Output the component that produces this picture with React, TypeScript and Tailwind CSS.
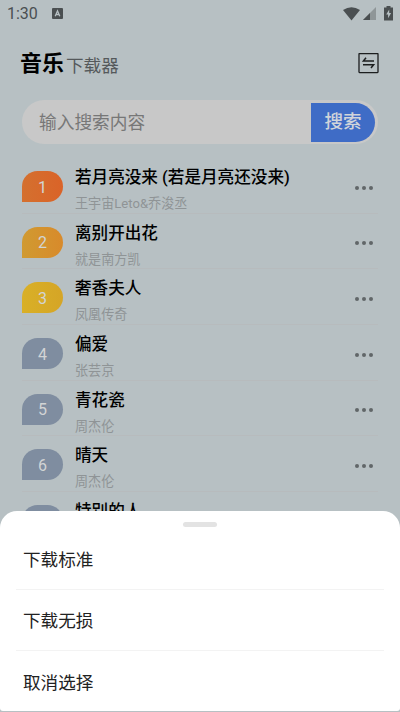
import React, { useState } from 'react';

interface Song {
  rank: number;
  title: string;
  artist: string;
}

const songs: Song[] = [
  { rank: 1, title: '若月亮没来 (若是月亮还没来)', artist: '王宇宙Leto&乔浚丞' },
  { rank: 2, title: '离别开出花', artist: '就是南方凯' },
  { rank: 3, title: '奢香夫人', artist: '凤凰传奇' },
  { rank: 4, title: '偏爱', artist: '张芸京' },
  { rank: 5, title: '青花瓷', artist: '周杰伦' },
  { rank: 6, title: '晴天', artist: '周杰伦' },
  { rank: 7, title: '特别的人', artist: '方大同' },
];

const actions = ['下载标准', '下载无损', '取消选择'];

const badgeColor = (rank: number) => {
  if (rank === 1) return 'bg-linear-to-r from-[#d4702f] to-[#da6328]';
  if (rank === 2) return 'bg-linear-to-r from-[#d09a31] to-[#d88a2b]';
  if (rank === 3) return 'bg-linear-to-r from-[#d9b027] to-[#d5a526]';
  return 'bg-[#7f8da0]';
};

const StatusBar: React.FC = () => (
  <div className="flex h-[27px] shrink-0 items-center pl-[7px] pr-[3px] text-[#4a4f51]">
    <span className="w-[45px] pt-px text-[16px] leading-7">1:30</span>
    <svg width="11" height="11" viewBox="0 0 11 11">
      <rect width="11" height="11" rx="1" fill="currentColor" />
      <path d="M3.2 8.2 5.5 2.8 7.8 8.2M4.1 6.5h2.8" fill="none" stroke="#b7c0c3" strokeWidth="1.3" />
    </svg>
    <svg className="ml-auto" width="17" height="14" viewBox="0 0 17 14">
      <path d="M0 3Q8.5-2.6 17 3L8.5 13.6Z" fill="currentColor" />
    </svg>
    <svg className="ml-[3px]" width="13" height="13" viewBox="0 0 13 13">
      <path d="M13 0V13H0Z" fill="#8f9698" />
      <path d="M7 6V13H0Z" fill="currentColor" />
    </svg>
    <svg className="ml-2 mr-1" width="9" height="15" viewBox="0 0 9 15">
      <path d="M2.5 0h4v1.5H9V14.4H0V1.5h2.5Z" fill="currentColor" />
      <path d="M5.2 3.4 2.2 8.5h1.9v3.8l3-5.2H5.2Z" fill="#b7c0c3" />
    </svg>
  </div>
);

const SongRow: React.FC<{ song: Song }> = ({ song }) => (
  <div className="flex h-[55.7px] shrink-0 border-b border-[#b7bbbd]">
    <div
      className={`mt-[13px] flex h-[31px] w-[41px] shrink-0 items-center justify-center rounded-[16px] rounded-bl-none pt-[2px] text-[16px] text-[#d2d4d5] ${badgeColor(song.rank)}`}
    >
      {song.rank}
    </div>
    <div className="ml-3 min-w-0 flex-1 pt-[8px]">
      <p className="h-[26px] text-[16.6px] leading-[24px] font-medium whitespace-nowrap text-black">{song.title}</p>
      <p className="text-[13.1px] leading-[24px] whitespace-nowrap text-[#8f9496]">{song.artist}</p>
    </div>
    <button type="button" className="mt-[27.5px] mr-[5px] flex h-1 w-[18px] items-center justify-between" aria-label="更多">
      <i className="size-[4px] rounded-full bg-[#616668]" />
      <i className="size-[4px] rounded-full bg-[#616668]" />
      <i className="size-[4px] rounded-full bg-[#616668]" />
    </button>
  </div>
);

const App: React.FC = () => {
  const [open, setOpen] = useState(true);

  return (
    <div className="relative flex h-[712px] w-[400px] flex-col overflow-hidden bg-[#b7c0c3] font-[Roboto,'Noto_Sans_CJK_SC',sans-serif]">
      <StatusBar />

      <header className="flex h-[73px] shrink-0 items-center justify-between pr-[21px] pl-5">
        <h1 className="flex items-center text-black">
          <span className="text-[22px] leading-8 font-bold">音乐</span>
          <span className="ml-[2px] pt-[5px] text-[17.6px] text-[#55595b]">下载器</span>
        </h1>
        <svg width="21" height="21" viewBox="0 0 21 21" fill="none" stroke="#1c1e1f">
          <rect x="1" y="0.6" width="19" height="19" rx="0.5" strokeWidth="1.3" />
          <path d="M16 8H5.4L8 4.8M5 11.8H15.6L13 15" strokeWidth="1.5" />
        </svg>
      </header>

      <div className="mr-[22px] ml-[22px] flex h-[44px] shrink-0 items-center rounded-full bg-[#c8c8c8] pr-[3px] pl-[17px]">
        <span className="flex-1 pt-[3px] text-[17.7px] text-[#777777]">输入搜索内容</span>
        <button
          type="button"
          className="h-[39px] w-16 rounded-r-full bg-[#3f6cc6] pt-[2px] text-[18.6px] font-medium text-[#d0d4da]"
        >
          搜索
        </button>
      </div>

      <main className="mt-[14px] flex min-h-0 flex-1 flex-col overflow-hidden px-[22px]">
        {songs.map(song => (
          <SongRow key={song.rank} song={song} />
        ))}
      </main>

      {open && (
        <div className="absolute inset-x-0 bottom-[1px] h-[200px] rounded-t-[17px] rounded-b-[3px] bg-white px-4 pt-[11px]">
          <div className="mx-auto h-[5px] w-[34px] rounded-full bg-[#e3e3e3]" />
          <ul className="mt-[1px] divide-y divide-[#f3f3f3]">
            {actions.map(action => (
              <li key={action}>
                <button
                  type="button"
                  onClick={() => setOpen(false)}
                  className="flex h-[60.5px] w-full items-center pt-[3px] pl-[7px] text-[17.6px] text-[#222222]"
                >
                  {action}
                </button>
              </li>
            ))}
          </ul>
        </div>
      )}
    </div>
  );
};

export default App;
